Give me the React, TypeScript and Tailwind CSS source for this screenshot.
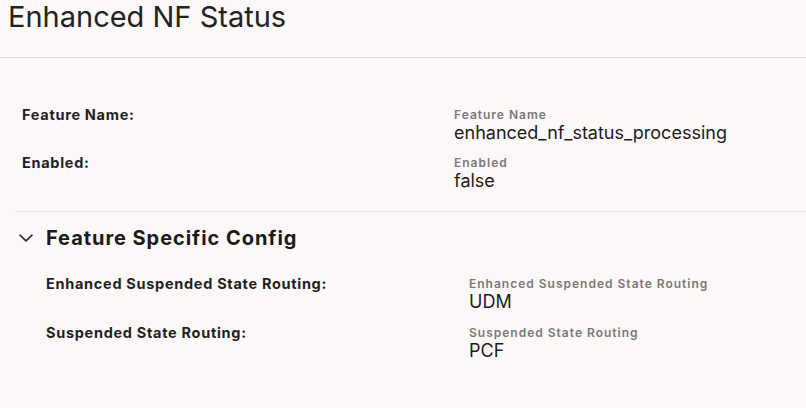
import React from "react";

type Row = { label: string; sub: string; value: string };

const general: Row[] = [
  { label: "Feature Name:", sub: "Feature Name", value: "enhanced_nf_status_processing" },
  { label: "Enabled:", sub: "Enabled", value: "false" },
];

const specific: Row[] = [
  { label: "Enhanced Suspended State Routing:", sub: "Enhanced Suspended State Routing", value: "UDM" },
  { label: "Suspended State Routing:", sub: "Suspended State Routing", value: "PCF" },
];

function Field({ row }: { row: Row }) {
  return (
    <>
      <div className="text-[14.5px] leading-[16px] font-bold tracking-[0.7px] text-[#1f1f1f]">{row.label}</div>
      <div className="flex flex-col">
        <span className="text-[12px] leading-[16px] font-semibold tracking-[1px] text-[#7a7878]">{row.sub}</span>
        <span className="text-[18px] leading-[20px] text-[#1c1c1c]">{row.value}</span>
      </div>
    </>
  );
}

export default function App() {
  return (
    <div
      className="w-[806px] h-[408px] overflow-hidden bg-[#fbf8f7] text-[#1e1e1e]"
      style={{ fontFamily: "Inter, 'Liberation Sans', sans-serif" }}
    >
      <header className="h-[58px] border-b border-[#e0dcda] pl-2">
        <h1 className="text-[29px] leading-[34px] font-normal text-[#222]">Enhanced NF Status</h1>
      </header>

      <section className="grid grid-cols-[432px_1fr] gap-y-3 pl-[22px] pt-[49px] pb-5">
        {general.map((r) => (
          <Field key={r.label} row={r} />
        ))}
      </section>

      <section className="ml-[15px] border-t border-[#e6e3e1]">
        <div className="flex items-center gap-[13px] pl-1 pt-[14px]">
          <svg width="14" height="8" viewBox="0 0 14 8" fill="none" className="text-[#2a2a2a]">
            <path d="M1 1.2 L7 6.8 L13 1.2" stroke="currentColor" strokeWidth="1.6" strokeLinecap="round" strokeLinejoin="round" />
          </svg>
          <h2 className="text-[20px] leading-[24px] font-bold tracking-[0.95px] text-[#1a1a1a]">Feature Specific Config</h2>
        </div>
        <div className="grid grid-cols-[423px_1fr] gap-y-[13px] pl-[31px] pt-[26px]">
          {specific.map((r) => (
            <Field key={r.label} row={r} />
          ))}
        </div>
      </section>
    </div>
  );
}
